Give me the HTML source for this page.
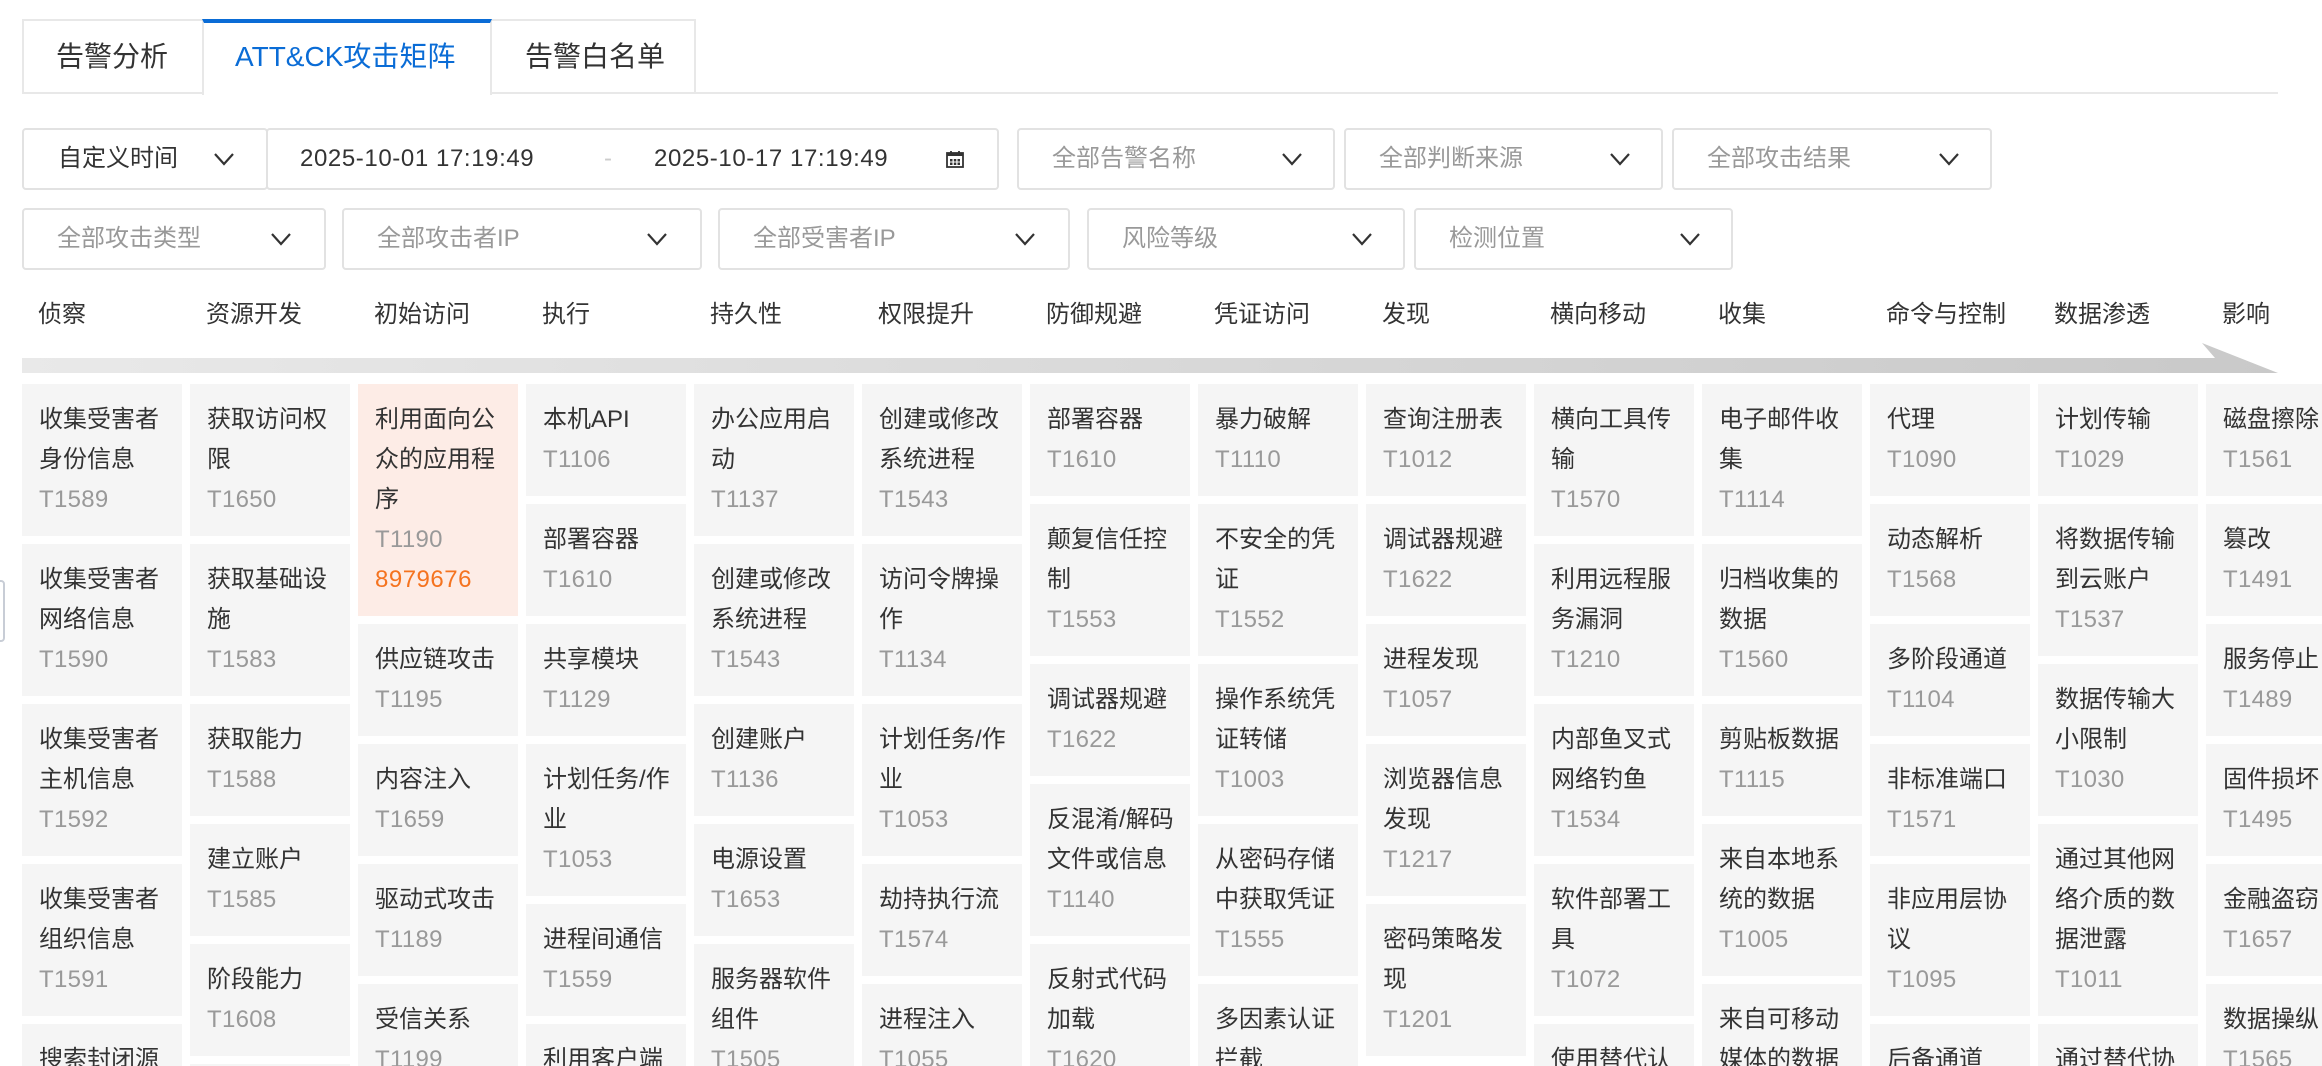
<!DOCTYPE html>
<html><head><meta charset="utf-8"><style>
*{box-sizing:border-box;margin:0;padding:0}
html,body{width:2322px;height:1066px;overflow:hidden;background:#fff;font-family:"Liberation Sans","Noto Sans CJK SC",sans-serif;color:#333}
#wrap{position:relative;width:2322px;height:1066px;overflow:hidden}
.abs{position:absolute}
.tab{position:absolute;top:19px;height:75px;border:2px solid #e8e8e8;background:#fff;font-size:28px;line-height:71px;color:#333}
.tab.act{border-top:4px solid #0a6cd6;border-bottom:none;color:#0a6cd6;height:76px;line-height:68px;z-index:2}
.tabline{position:absolute;left:22px;width:2256px;top:92px;height:2px;background:#e8e8e8}
.box{position:absolute;height:62px;border:2px solid #e2e2e2;border-radius:4px;background:#fff;font-size:24px;line-height:58px;color:#999}
.box .t{position:absolute;left:33px;top:0}
.date{letter-spacing:0.6px}
.chev{position:absolute;top:21px;width:24px;height:16px}
.hdr{position:absolute;top:298px;font-size:24px;line-height:34px;color:#333}
.col{position:absolute;top:384px;width:160px;display:flex;flex-direction:column;gap:8px}
.card{background:#f5f5f5;padding:16px 0 16px 17px;font-size:24px;line-height:40px;color:#333;white-space:nowrap}
.card .id{color:#999;letter-spacing:0.3px}
.card.hl{background:#fdece6}
.card .cnt{color:#f5731f;letter-spacing:0.5px}
</style></head><body><div id="wrap">
<div class="tabline"></div>
<div class="tab" style="left:22px;width:182px;padding-left:32px">告警分析</div>
<div class="tab act" style="left:202px;width:290px;padding-left:31px">ATT&amp;CK攻击矩阵</div>
<div class="tab" style="left:490px;width:206px;padding-left:33px">告警白名单</div>

<div class="box" style="left:22px;top:128px;width:246px;color:#333"><span class="t" style="left:34px">自定义时间</span>
<svg class="chev" style="left:188px" viewBox="0 0 24 16"><path d="M3 3l9 10 9-10" fill="none" stroke="#333" stroke-width="2.2"/></svg></div>
<div class="box" style="left:266px;top:128px;width:733px;color:#333"><span class="t date" style="left:32px">2025-10-01 17:19:49</span><span class="t" style="left:336px;color:#ccc">-</span><span class="t date" style="left:386px">2025-10-17 17:19:49</span>
<svg class="abs" style="left:678px;top:20px" width="18" height="18" viewBox="0 0 18 18"><rect x="1" y="3" width="16" height="14" fill="none" stroke="#333" stroke-width="1.8"/><rect x="1" y="3" width="16" height="3" fill="#333"/><path d="M5 1v4M13 1v4" stroke="#333" stroke-width="1.8"/><rect x="4" y="9" width="2.5" height="2.5" fill="#333"/><rect x="7.8" y="9" width="2.5" height="2.5" fill="#333"/><rect x="11.5" y="9" width="2.5" height="2.5" fill="#333"/><rect x="4" y="12.5" width="2.5" height="2.5" fill="#333"/><rect x="7.8" y="12.5" width="2.5" height="2.5" fill="#333"/><rect x="11.5" y="12.5" width="2.5" height="2.5" fill="#333"/></svg></div>
<div class="box" style="left:1017px;top:128px;width:318px"><span class="t">全部告警名称</span><svg class="chev" style="left:261px" viewBox="0 0 24 16"><path d="M3 3l9 10 9-10" fill="none" stroke="#333" stroke-width="2.2"/></svg></div>
<div class="box" style="left:1344px;top:128px;width:319px"><span class="t">全部判断来源</span><svg class="chev" style="left:262px" viewBox="0 0 24 16"><path d="M3 3l9 10 9-10" fill="none" stroke="#333" stroke-width="2.2"/></svg></div>
<div class="box" style="left:1672px;top:128px;width:320px"><span class="t">全部攻击结果</span><svg class="chev" style="left:263px" viewBox="0 0 24 16"><path d="M3 3l9 10 9-10" fill="none" stroke="#333" stroke-width="2.2"/></svg></div>

<div class="box" style="left:22px;top:208px;width:304px"><span class="t">全部攻击类型</span><svg class="chev" style="left:245px" viewBox="0 0 24 16"><path d="M3 3l9 10 9-10" fill="none" stroke="#333" stroke-width="2.2"/></svg></div>
<div class="box" style="left:342px;top:208px;width:360px"><span class="t">全部攻击者IP</span><svg class="chev" style="left:301px" viewBox="0 0 24 16"><path d="M3 3l9 10 9-10" fill="none" stroke="#333" stroke-width="2.2"/></svg></div>
<div class="box" style="left:718px;top:208px;width:352px"><span class="t">全部受害者IP</span><svg class="chev" style="left:293px" viewBox="0 0 24 16"><path d="M3 3l9 10 9-10" fill="none" stroke="#333" stroke-width="2.2"/></svg></div>
<div class="box" style="left:1087px;top:208px;width:318px"><span class="t">风险等级</span><svg class="chev" style="left:261px" viewBox="0 0 24 16"><path d="M3 3l9 10 9-10" fill="none" stroke="#333" stroke-width="2.2"/></svg></div>
<div class="box" style="left:1414px;top:208px;width:319px"><span class="t">检测位置</span><svg class="chev" style="left:262px" viewBox="0 0 24 16"><path d="M3 3l9 10 9-10" fill="none" stroke="#333" stroke-width="2.2"/></svg></div>

<div class="hdr" style="left:38px">侦察</div>
<div class="hdr" style="left:206px">资源开发</div>
<div class="hdr" style="left:374px">初始访问</div>
<div class="hdr" style="left:542px">执行</div>
<div class="hdr" style="left:710px">持久性</div>
<div class="hdr" style="left:878px">权限提升</div>
<div class="hdr" style="left:1046px">防御规避</div>
<div class="hdr" style="left:1214px">凭证访问</div>
<div class="hdr" style="left:1382px">发现</div>
<div class="hdr" style="left:1550px">横向移动</div>
<div class="hdr" style="left:1718px">收集</div>
<div class="hdr" style="left:1886px">命令与控制</div>
<div class="hdr" style="left:2054px">数据渗透</div>
<div class="hdr" style="left:2222px">影响</div>

<svg class="abs" style="left:0;top:0" width="2322" height="380"><defs><linearGradient id="g" x1="0" x2="1"><stop offset="0" stop-color="#e9e9e9"/><stop offset="1" stop-color="#c9c9c9"/></linearGradient></defs>
<polygon points="22,358 2215,358 2202,343 2278,373 22,373" fill="url(#g)"/></svg>

<div class="abs" style="left:-4px;top:580px;width:9px;height:62px;border:2px solid #c8cdd6;border-radius:4px"></div>

<div class="col" style="left:22px">
<div class="card">收集受害者<br>身份信息<br><span class="id">T1589</span></div>
<div class="card">收集受害者<br>网络信息<br><span class="id">T1590</span></div>
<div class="card">收集受害者<br>主机信息<br><span class="id">T1592</span></div>
<div class="card">收集受害者<br>组织信息<br><span class="id">T1591</span></div>
<div class="card">搜索封闭源<br>数据<br><span class="id">T1597</span></div>
</div>
<div class="col" style="left:190px">
<div class="card">获取访问权<br>限<br><span class="id">T1650</span></div>
<div class="card">获取基础设<br>施<br><span class="id">T1583</span></div>
<div class="card">获取能力<br><span class="id">T1588</span></div>
<div class="card">建立账户<br><span class="id">T1585</span></div>
<div class="card">阶段能力<br><span class="id">T1608</span></div>
<div class="card">入侵基础设<br>施<br><span class="id">T1584</span></div>
</div>
<div class="col" style="left:358px">
<div class="card hl">利用面向公<br>众的应用程<br>序<br><span class="id">T1190</span><br><span class="cnt">8979676</span></div>
<div class="card">供应链攻击<br><span class="id">T1195</span></div>
<div class="card">内容注入<br><span class="id">T1659</span></div>
<div class="card">驱动式攻击<br><span class="id">T1189</span></div>
<div class="card">受信关系<br><span class="id">T1199</span></div>
</div>
<div class="col" style="left:526px">
<div class="card">本机API<br><span class="id">T1106</span></div>
<div class="card">部署容器<br><span class="id">T1610</span></div>
<div class="card">共享模块<br><span class="id">T1129</span></div>
<div class="card">计划任务/作<br>业<br><span class="id">T1053</span></div>
<div class="card">进程间通信<br><span class="id">T1559</span></div>
<div class="card">利用客户端<br>执行<br><span class="id">T1203</span></div>
</div>
<div class="col" style="left:694px">
<div class="card">办公应用启<br>动<br><span class="id">T1137</span></div>
<div class="card">创建或修改<br>系统进程<br><span class="id">T1543</span></div>
<div class="card">创建账户<br><span class="id">T1136</span></div>
<div class="card">电源设置<br><span class="id">T1653</span></div>
<div class="card">服务器软件<br>组件<br><span class="id">T1505</span></div>
</div>
<div class="col" style="left:862px">
<div class="card">创建或修改<br>系统进程<br><span class="id">T1543</span></div>
<div class="card">访问令牌操<br>作<br><span class="id">T1134</span></div>
<div class="card">计划任务/作<br>业<br><span class="id">T1053</span></div>
<div class="card">劫持执行流<br><span class="id">T1574</span></div>
<div class="card">进程注入<br><span class="id">T1055</span></div>
</div>
<div class="col" style="left:1030px">
<div class="card">部署容器<br><span class="id">T1610</span></div>
<div class="card">颠复信任控<br>制<br><span class="id">T1553</span></div>
<div class="card">调试器规避<br><span class="id">T1622</span></div>
<div class="card">反混淆/解码<br>文件或信息<br><span class="id">T1140</span></div>
<div class="card">反射式代码<br>加载<br><span class="id">T1620</span></div>
</div>
<div class="col" style="left:1198px">
<div class="card">暴力破解<br><span class="id">T1110</span></div>
<div class="card">不安全的凭<br>证<br><span class="id">T1552</span></div>
<div class="card">操作系统凭<br>证转储<br><span class="id">T1003</span></div>
<div class="card">从密码存储<br>中获取凭证<br><span class="id">T1555</span></div>
<div class="card">多因素认证<br>拦截<br><span class="id">T1111</span></div>
</div>
<div class="col" style="left:1366px">
<div class="card">查询注册表<br><span class="id">T1012</span></div>
<div class="card">调试器规避<br><span class="id">T1622</span></div>
<div class="card">进程发现<br><span class="id">T1057</span></div>
<div class="card">浏览器信息<br>发现<br><span class="id">T1217</span></div>
<div class="card">密码策略发<br>现<br><span class="id">T1201</span></div>
</div>
<div class="col" style="left:1534px">
<div class="card">横向工具传<br>输<br><span class="id">T1570</span></div>
<div class="card">利用远程服<br>务漏洞<br><span class="id">T1210</span></div>
<div class="card">内部鱼叉式<br>网络钓鱼<br><span class="id">T1534</span></div>
<div class="card">软件部署工<br>具<br><span class="id">T1072</span></div>
<div class="card">使用替代认<br>证材料<br><span class="id">T1550</span></div>
</div>
<div class="col" style="left:1702px">
<div class="card">电子邮件收<br>集<br><span class="id">T1114</span></div>
<div class="card">归档收集的<br>数据<br><span class="id">T1560</span></div>
<div class="card">剪贴板数据<br><span class="id">T1115</span></div>
<div class="card">来自本地系<br>统的数据<br><span class="id">T1005</span></div>
<div class="card">来自可移动<br>媒体的数据<br><span class="id">T1025</span></div>
</div>
<div class="col" style="left:1870px">
<div class="card">代理<br><span class="id">T1090</span></div>
<div class="card">动态解析<br><span class="id">T1568</span></div>
<div class="card">多阶段通道<br><span class="id">T1104</span></div>
<div class="card">非标准端口<br><span class="id">T1571</span></div>
<div class="card">非应用层协<br>议<br><span class="id">T1095</span></div>
<div class="card">后备通道<br><span class="id">T1008</span></div>
</div>
<div class="col" style="left:2038px">
<div class="card">计划传输<br><span class="id">T1029</span></div>
<div class="card">将数据传输<br>到云账户<br><span class="id">T1537</span></div>
<div class="card">数据传输大<br>小限制<br><span class="id">T1030</span></div>
<div class="card">通过其他网<br>络介质的数<br>据泄露<br><span class="id">T1011</span></div>
<div class="card">通过替代协<br>议的数据泄<br>露<br><span class="id">T1048</span></div>
</div>
<div class="col" style="left:2206px">
<div class="card">磁盘擦除<br><span class="id">T1561</span></div>
<div class="card">篡改<br><span class="id">T1491</span></div>
<div class="card">服务停止<br><span class="id">T1489</span></div>
<div class="card">固件损坏<br><span class="id">T1495</span></div>
<div class="card">金融盗窃<br><span class="id">T1657</span></div>
<div class="card">数据操纵<br><span class="id">T1565</span></div>
</div>
</div></body></html>
